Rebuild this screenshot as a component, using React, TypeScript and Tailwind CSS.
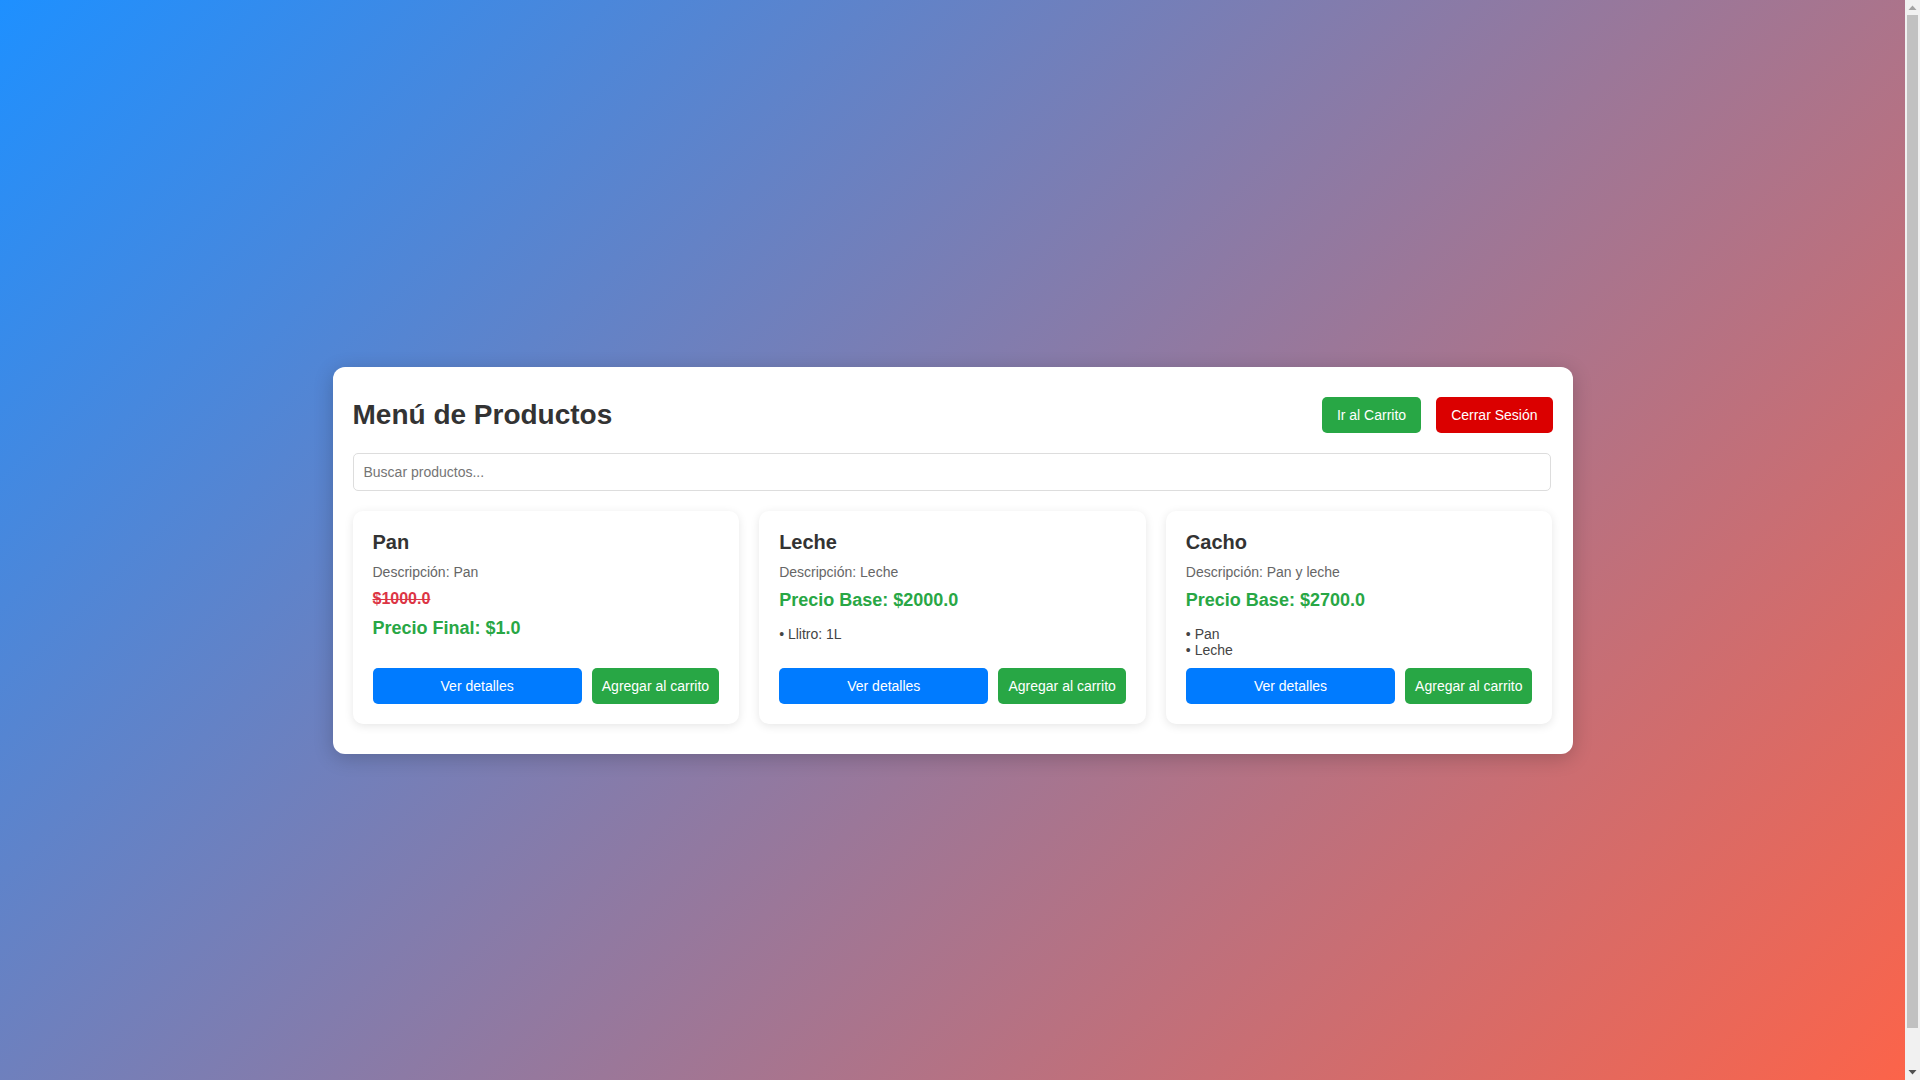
import React from "react";

type Product = {
  name: string;
  desc: string;
  original?: string;
  finalPrice?: string;
  basePrice?: string;
  features: string[];
};

const products: Product[] = [
  { name: "Pan", desc: "Pan", original: "$1000.0", finalPrice: "$1.0", features: [] },
  { name: "Leche", desc: "Leche", basePrice: "$2000.0", features: ["Llitro: 1L"] },
  { name: "Cacho", desc: "Pan y leche", basePrice: "$2700.0", features: ["Pan", "Leche"] },
];

function ProductCard({ p }: { p: Product }) {
  return (
    <div className="flex flex-col bg-white rounded-[10px] p-5 shadow-[0_2px_10px_rgba(0,0,0,0.1)]">
      <h3 className="text-[20px] leading-[23px] font-bold text-[#333] mb-[10px]">{p.name}</h3>
      <p className="text-[14px] leading-[16px] text-[#666] mb-[10px]">Descripción: {p.desc}</p>
      {p.original ? (
        <>
          <div className="text-[16px] leading-[18px] font-bold text-[#dc3545] line-through mb-[10px]">{p.original}</div>
          <div className="text-[18px] leading-[21px] font-bold text-[#28a745]">Precio Final: {p.finalPrice}</div>
        </>
      ) : (
        <div className="text-[18px] leading-[21px] font-bold text-[#28a745]">Precio Base: {p.basePrice}</div>
      )}
      {p.features.length > 0 && (
        <div className="mt-[15px] mb-[10px] text-[14px] leading-[16px] text-[#444]">
          {p.features.map((f) => (
            <div key={f}>• {f}</div>
          ))}
        </div>
      )}
      <div className="mt-auto flex gap-[10px]">
        <button className="flex-1 h-9 rounded-[5px] bg-[#007bff] text-white text-[14px] leading-[16px]">Ver detalles</button>
        <button className="h-9 px-[10px] rounded-[5px] bg-[#28a745] text-white text-[14px] leading-[16px]">Agregar al carrito</button>
      </div>
    </div>
  );
}

function FakeScrollbar() {
  return (
    <div className="fixed right-0 top-0 w-[15px] h-screen bg-[#f1f1f1] flex flex-col items-center">
      <div className="h-[15px] w-full flex items-center justify-center">
        <svg width="9" height="5" viewBox="0 0 9 5">
          <path d="M0.5 5 L4.5 0.5 L8.5 5 Z" fill="#a3a3a3" />
        </svg>
      </div>
      <div className="w-[11px] h-[1013px] bg-[#c1c1c1]" />
      <div className="flex-1" />
      <div className="h-[15px] w-full flex items-center justify-center">
        <svg width="9" height="5" viewBox="0 0 9 5">
          <path d="M0.5 0 L4.5 4.5 L8.5 0 Z" fill="#505050" />
        </svg>
      </div>
    </div>
  );
}

export default function App() {
  return (
    <>
      <div className="box-content mr-[15px] min-h-screen p-5 flex items-center justify-center bg-[linear-gradient(135deg,#1e90ff,#ff6347)] font-['Liberation_Sans',Arial,sans-serif]">
        <div className="w-[1240px] bg-white rounded-xl px-5 pt-5 pb-[30px] shadow-[0_4px_20px_rgba(0,0,0,0.2)]">
          <div className="h-[56px] mb-[10px] flex items-center justify-between">
            <h2 className="text-[28px] leading-[32px] font-bold text-[#333]">Menú de Productos</h2>
            <div className="flex gap-[15px]">
              <button className="h-9 px-[15px] rounded-[5px] bg-[#28a745] text-white text-[14px] leading-[16px]">Ir al Carrito</button>
              <button className="h-9 px-[15px] rounded-[5px] bg-[#db0000] text-white text-[14px] leading-[16px]">Cerrar Sesión</button>
            </div>
          </div>
          <input
            type="text"
            placeholder="Buscar productos..."
            className="block w-[1198px] h-[38px] px-[10px] border border-[#ddd] rounded-[5px] text-[14px] text-[#333] placeholder:text-[#757575] outline-none"
          />
          <div className="grid grid-cols-3 gap-5 mt-5">
            {products.map((p) => (
              <ProductCard key={p.name} p={p} />
            ))}
          </div>
        </div>
      </div>
      <FakeScrollbar />
    </>
  );
}
